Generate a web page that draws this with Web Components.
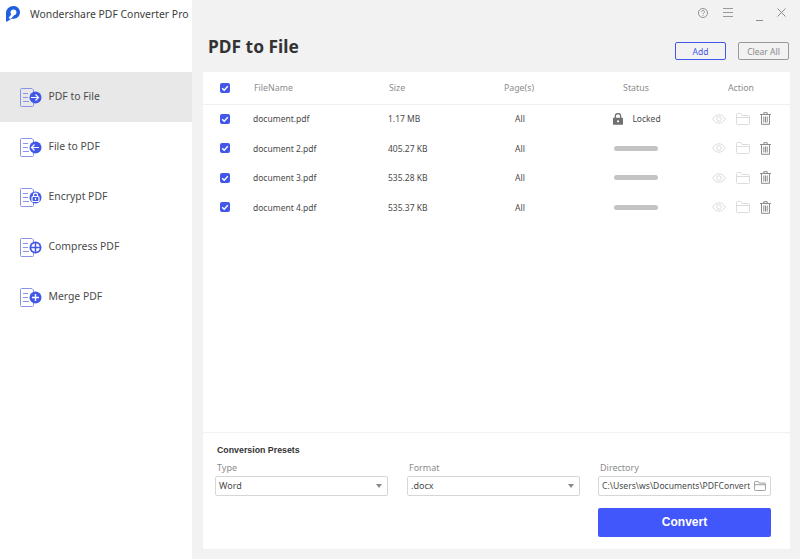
<!DOCTYPE html>
<html>
<head>
<meta charset="utf-8">
<title>PDF Converter</title>
<style>
  html, body { margin: 0; height: 100%; overflow: hidden; }
  body { font-family: "Noto Sans", "Open Sans", sans-serif; background: #f2f2f2; }
</style>
</head>
<body>
<pdf-app></pdf-app>

<script>
// icons
const checkIcon = `<svg width="10" height="10" viewBox="0 0 10 10"><rect width="10" height="10" rx="2" fill="#4257e8"/><path d="M2.2 5.2l2 2 3.6-4" fill="none" stroke="#fff" stroke-width="1.4"/></svg>`;
const eyeIcon = `<svg width="14" height="10" viewBox="0 0 14 10"><path d="M.6 5C2.4 2.2 4.6.8 7 .8s4.6 1.4 6.4 4.2C11.600 7.800 9.400 9.200 7 9.200S2.400 7.800.6 5z" fill="none" stroke="#dcdcdc"/><circle cx="7" cy="5" r="2.300" fill="none" stroke="#dcdcdc"/></svg>`;
const folderIcon = (c) => `<svg width="14" height="12" viewBox="0 0 14 12"><path d="M.5 10.500V1.500a1 1 0 0 1 1-1h3.200l1.300 2h6.500a1 1 0 0 1 1 1v7a1 1 0 0 1-1 1h-11a1 1 0 0 1-1-1zM.5 4.500h13" fill="none" stroke="${c}"/></svg>`;
const trashIcon = `<svg width="11" height="13" viewBox="0 0 11 13"><path d="M0 2.500h11M3.800 2.500V.7h3.400v1.800M1.500 2.500v9.800h8V2.500M3.800 4.500v6M5.500 4.500v6M7.200 4.500v6" fill="none" stroke="#8c8c8c"/></svg>`;
const lockIcon = `<svg width="10" height="12" viewBox="0 0 10 12"><path d="M2.300 5V3.200a2.700 2.700 0 0 1 5.400 0V5" fill="none" stroke="#707070" stroke-width="1.300"/><rect y="4.800" width="10" height="7" rx=".6" fill="#707070"/><circle cx="5" cy="8.300" r="1.100" fill="#fff"/></svg>`;
const badges = {
  right: `<path d="M13.500 13h7M18 10l3 3-3 3" fill="none" stroke="#fff" stroke-width="1.200"/>`,
  left: `<path d="M21.500 13h-7M17 10l-3 3 3 3" fill="none" stroke="#fff" stroke-width="1.200"/>`,
  lock: `<rect x="14.500" y="12" width="7" height="5" rx="1" fill="none" stroke="#fff" stroke-width="1.200"/><path d="M16 12v-1.300a2 2 0 0 1 4 0V12" fill="none" stroke="#fff" stroke-width="1.200"/><rect x="17.400" y="13.500" width="1.200" height="2" fill="#fff"/>`,
  grid: `<circle cx="18" cy="13" r="4.300" fill="#fff"/><path d="M18 8v10M13 13h10" stroke="#4257e8" stroke-width="1.500"/>`,
  plus: `<path d="M18 9.500v7M14.500 13h7" stroke="#fff" stroke-width="1.400"/>`
};

class PdfLogo extends HTMLElement {
  constructor() {
    super();
    this.attachShadow({ mode: 'open' });
    this.shadowRoot.innerHTML = `
      <style>:host { display: block; width: 14px; height: 16px; } svg { display: block; }</style>
      <svg width="14" height="16" viewBox="0 0 14 16">
        <path d="M7.500 0C11 0 14 2.600 14 6.200c0 3.800-3 6.600-6.800 6.600H5.400L1.600 15.300 0 15.800V6.800C0 3 3.500 0 7.500 0z" fill="#1f5fe0"/>
        <circle cx="7.500" cy="6.300" r="2.900" fill="#fff"/>
        <path d="M2.500 12L6 7.500l2 2L4.500 13z" fill="#fff"/>
      </svg>`;
  }
}

class NavItem extends HTMLElement {
  constructor() {
    super();
    this.attachShadow({ mode: 'open' });
    const badge = badges[this.getAttribute('icon')] || '';
    this.shadowRoot.innerHTML = `
      <style>
        :host { display: flex; align-items: center; height: 50px; padding-left: 20px; gap: 6.500px; font-size: 10.400px; color: #4a4a4a; }
        :host([active]) { background: #e8e8e8; }
        svg { display: block; flex: none; }
        span { margin-top: -2px; }
      </style>
      <svg width="22" height="19" viewBox="0 0 22 19" preserveAspectRatio="xMinYMid meet" style="overflow:visible">
        <path d="M.5 1.500a1 1 0 0 1 1-1h10.500l1.500 1.500v15.500a1 1 0 0 1-1 1H1.500a1 1 0 0 1-1-1z" fill="none" stroke="#8b93e6"/>
        <path d="M3 5.500h5M3 9.500h5M3 13.500h6" stroke="#8b93e6"/>
        <g transform="translate(-2.500 -3.500)"><circle cx="18" cy="13" r="6" fill="#4257e8"/>${badge}</g>
      </svg>
      <span><slot></slot></span>`;
  }
}

class SideBar extends HTMLElement {
  constructor() {
    super();
    this.attachShadow({ mode: 'open' });
    this.shadowRoot.innerHTML = `
      <style>
        :host { display: flex; flex-direction: column; width: 192px; flex: none; background: #fff; }
        .brand { display: flex; align-items: center; height: 72px; box-sizing: border-box; padding: 0 0 44px 6px; gap: 10px; font-size: 10.400px; color: #3c3c3c; white-space: nowrap; }
      </style>
      <div class="brand"><pdf-logo></pdf-logo><span>Wondershare PDF Converter Pro</span></div>
      <slot></slot>`;
  }
}

class WindowControls extends HTMLElement {
  constructor() {
    super();
    this.attachShadow({ mode: 'open' });
    this.shadowRoot.innerHTML = `
      <style>
        :host { display: flex; align-items: center; justify-content: flex-end; height: 25px; padding-right: 14px; }
        svg { display: block; }
      </style>
      <svg width="10" height="10" viewBox="0 0 11 11"><circle cx="5.500" cy="5.500" r="5" fill="none" stroke="#8a8a8a"/><path d="M3.900 4.300a1.600 1.600 0 1 1 2.500 1.300c-.6.400-.9.700-.9 1.300M5.500 8v.8" fill="none" stroke="#8a8a8a"/></svg>
      <svg width="10" height="9" viewBox="0 0 10 9" style="margin-left:15px"><path d="M0 .5h10M0 4.500h10M0 8.500h10" stroke="#9a9a9a"/></svg>
      <svg width="7" height="9" viewBox="0 0 7 9" style="margin-left:23px;margin-top:8px"><path d="M0 8.500h7" stroke="#8a8a8a"/></svg>
      <svg width="9" height="9" viewBox="0 0 9 9" style="margin-left:14px"><path d="M.5.500l8 8M8.500.500l-8 8" stroke="#8a8a8a"/></svg>`;
  }
}

class ActionButton extends HTMLElement {
  constructor() {
    super();
    this.attachShadow({ mode: 'open' });
    this.shadowRoot.innerHTML = `
      <style>
        :host { display: flex; align-items: center; justify-content: center; box-sizing: border-box; height: 18px; border: 1px solid #999; border-radius: 2px; font-size: 8.500px; color: #8a8a8a; width: 51px; }
        :host([primary]) { border-color: #4257e8; color: #4257e8; }
      </style>
      <slot></slot>`;
  }
}

class FileRow extends HTMLElement {
  constructor() {
    super();
    this.attachShadow({ mode: 'open' });
    const locked = this.hasAttribute('locked');
    const status = locked
      ? `<span class="locked">${lockIcon}<span>Locked</span></span>`
      : `<span class="bar"></span>`;
    this.shadowRoot.innerHTML = `
      <style>
        :host { display: grid; grid-template-columns: 33px 135px 92px 80px 154px 1fr; align-items: center; height: 29.500px; padding-left: 17px; font-size: 8.500px; color: #4a4a4a; }
        svg { display: block; }
        .pages, .status { display: flex; justify-content: center; }
        .locked { display: flex; align-items: center; gap: 9px; }
        .bar { width: 44px; height: 5px; border-radius: 3px; background: #c4c4c4; margin-right: 2px; }
        .actions { display: flex; align-items: center; gap: 10px; margin-left: -2px; }
      </style>
      ${checkIcon}
      <span>${this.getAttribute('name')}</span>
      <span>${this.getAttribute('size')}</span>
      <span class="pages">All</span>
      <span class="status">${status}</span>
      <span class="actions">${eyeIcon}${folderIcon('#dcdcdc')}${trashIcon}</span>`;
  }
}

class FileTable extends HTMLElement {
  constructor() {
    super();
    this.attachShadow({ mode: 'open' });
    this.shadowRoot.innerHTML = `
      <style>
        :host { display: block; height: 360px; background: #fff; border-radius: 2px; }
        .head { display: grid; grid-template-columns: 34px 135px 90px 80px 154px 56px; align-items: center; height: 32px; padding-left: 17px; font-size: 8.800px; color: #8c8c8c; border-bottom: 1px solid #f0f0f0; }
        .head svg { display: block; }
        .c { text-align: center; }
        .rows { margin-top: -1px; }
      </style>
      <div class="head">${checkIcon}<span>FileName</span><span>Size</span><span class="c">Page(s)</span><span class="c">Status</span><span class="c">Action</span></div>
      <div class="rows"><slot></slot></div>`;
  }
}

class SelectField extends HTMLElement {
  constructor() {
    super();
    this.attachShadow({ mode: 'open' });
    const arrow = this.hasAttribute('folder')
      ? folderIcon('#8a8a8a')
      : `<span class="arrow"></span>`;
    this.shadowRoot.innerHTML = `
      <style>
        :host { display: block; width: 173px; font-size: 9px; color: #8c8c8c; }
        :host([folder]) .val { font-size: 8.600px; }
        .label { height: 16px; line-height: 15px; padding-left: 2px; }
        .box { display: flex; align-items: center; box-sizing: border-box; height: 20px; border: 1px solid #d6d6d6; border-radius: 2px; padding: 0 3px 0 2px; color: #4a4a4a; background: #fff; gap: 4px; }
        .val { flex: 1; overflow: hidden; white-space: nowrap; margin-top: -1px; padding-left: 1px; }
        .arrow { width: 0; height: 0; border: 3.500px solid transparent; border-top: 4px solid #8a8a8a; border-bottom: 0; margin-right: 2px; }
        svg { display: block; flex: none; width: 12px; height: 10px; margin-right: 1px; }
      </style>
      <div class="label">${this.getAttribute('label')}</div>
      <div class="box"><span class="val">${this.getAttribute('value')}</span>${arrow}</div>`;
  }
}

class PresetPanel extends HTMLElement {
  constructor() {
    super();
    this.attachShadow({ mode: 'open' });
    this.shadowRoot.innerHTML = `
      <style>
        :host { display: block; box-sizing: border-box; height: 116px; margin-top: 1px; background: #fff; padding: 11px 19px 0 12px; border-radius: 2px; }
        h3 { margin: 0 0 3px 2px; font: bold 8.800px/13px "Liberation Sans", sans-serif; color: #333; }
        .fields { display: grid; grid-template-columns: 192px 191px 173px; }
        .go { display: flex; justify-content: flex-end; margin-top: 12px; }
        button { width: 173px; height: 29px; border: 0; border-radius: 2px; padding: 0 0 2px; background: #4257fb; color: #fff; font: bold 12px "Liberation Sans", sans-serif; }
      </style>
      <h3>Conversion Presets</h3>
      <div class="fields"><slot></slot></div>
      <div class="go"><button>Convert</button></div>`;
  }
}

class PdfApp extends HTMLElement {
  constructor() {
    super();
    this.attachShadow({ mode: 'open' });
    this.shadowRoot.innerHTML = `
      <style>
        :host { display: flex; width: 800px; height: 559px; overflow: hidden; background: #f2f2f2; }
        main { flex: 1; display: flex; flex-direction: column; padding: 0 10px 0 11px; min-width: 0; }
        .top { display: flex; align-items: flex-start; justify-content: space-between; height: 47px; }
        h1 { margin: 0; font: bold 17.400px/24px "Noto Sans", sans-serif; color: #333; padding: 9px 0 0 5px; }
        .btns { display: flex; gap: 12px; margin: 17px 1px 0 0; }
        window-controls { margin-right: -10px; }
      </style>
      <side-bar>
        <nav-item active icon="right">PDF to File</nav-item>
        <nav-item icon="left">File to PDF</nav-item>
        <nav-item icon="lock">Encrypt PDF</nav-item>
        <nav-item icon="grid">Compress PDF</nav-item>
        <nav-item icon="plus">Merge PDF</nav-item>
      </side-bar>
      <main>
        <window-controls></window-controls>
        <div class="top">
          <h1>PDF to File</h1>
          <div class="btns"><action-button primary>Add</action-button><action-button>Clear All</action-button></div>
        </div>
        <file-table>
          <file-row locked name="document.pdf" size="1.17 MB"></file-row>
          <file-row name="document 2.pdf" size="405.27 KB"></file-row>
          <file-row name="document 3.pdf" size="535.28 KB"></file-row>
          <file-row name="document 4.pdf" size="535.37 KB"></file-row>
        </file-table>
        <preset-panel>
          <select-field label="Type" value="Word"></select-field>
          <select-field label="Format" value=".docx"></select-field>
          <select-field folder label="Directory" value="C:\\Users\\ws\\Documents\\PDFConvert"></select-field>
        </preset-panel>
      </main>`;
  }
}

customElements.define('pdf-logo', PdfLogo);
customElements.define('nav-item', NavItem);
customElements.define('side-bar', SideBar);
customElements.define('window-controls', WindowControls);
customElements.define('action-button', ActionButton);
customElements.define('file-row', FileRow);
customElements.define('file-table', FileTable);
customElements.define('select-field', SelectField);
customElements.define('preset-panel', PresetPanel);
customElements.define('pdf-app', PdfApp);
</script>
</body>
</html>
